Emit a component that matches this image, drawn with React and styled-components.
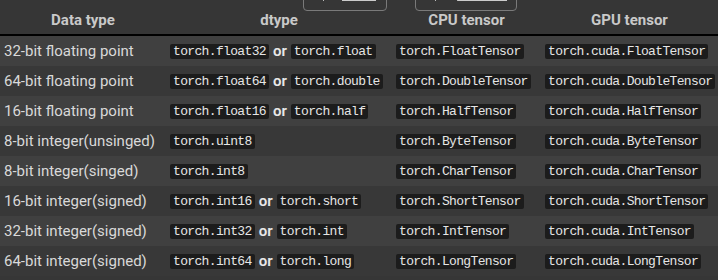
import React from "react";
import styled, { createGlobalStyle } from "styled-components";

const GlobalStyle = createGlobalStyle`
  html, body {
    margin: 0;
    padding: 0;
    background: #363636;
    overflow: hidden;
  }
`;

const Page = styled.div`
  position: relative;
  width: 718px;
  height: 280px;
  background: #363636;
  font-family: Roboto, "Noto Sans", sans-serif;
`;

const Table = styled.table`
  width: 718px;
  border-collapse: collapse;
  table-layout: fixed;
`;

const HeadCell = styled.th`
  width: ${(p) => p.$w}px;
  height: 35px;
  box-sizing: border-box;
  padding: 6px 4px 0;
  text-align: center;
  font-size: 15px;
  font-weight: 700;
  color: #c9c9c9;
  border-bottom: 2px solid #000;
`;

const Row = styled.tr`
  background: ${(p) => (p.$odd ? "#404040" : "#383838")};
`;

const Cell = styled.td`
  height: 30px;
  padding: 0 4px;
  font-size: 15px;
  color: #d9d9d9;
  white-space: nowrap;
  vertical-align: middle;
`;

const Code = styled.code`
  display: inline-block;
  vertical-align: 1px;
  font-family: "Liberation Mono", "DejaVu Sans Mono", monospace;
  font-size: 13px;
  letter-spacing: -0.65px;
  line-height: 15px;
  padding: 0 3px;
  background: #1c1c1c;
  color: #e6e6e6;
  border-radius: 2px;
`;

const Or = styled.span`
  font-weight: 600;
  color: #e8e8e8;
  margin: 0 4px;
`;

/* floating toolbar cut by the top edge */
const Toolbar = styled.div`
  position: absolute;
  top: -11px;
  left: 303px;
  display: flex;
  gap: 28px;
`;

const ToolButton = styled.div`
  display: flex;
  align-items: flex-end;
  gap: ${(p) => p.$gap}px;
  width: ${(p) => p.$w}px;
  height: 22px;
  box-sizing: border-box;
  padding: 0 0 9px 19px;
  border: 1px solid #7a7a7a;
  border-radius: 4px;
  background: #363636;
`;

const Glyph = styled.span`
  display: flex;
  align-items: flex-end;
`;

const Tick = styled.span`
  width: 1px;
  height: 3px;
  background: #bbb;
`;

const Under = styled.span`
  width: ${(p) => p.$w}px;
  height: 1px;
  background: #ccc;
`;

const rows = [
  ["32-bit floating point", ["torch.float32", "torch.float"], "torch.FloatTensor", "torch.cuda.FloatTensor"],
  ["64-bit floating point", ["torch.float64", "torch.double"], "torch.DoubleTensor", "torch.cuda.DoubleTensor"],
  ["16-bit floating point", ["torch.float16", "torch.half"], "torch.HalfTensor", "torch.cuda.HalfTensor"],
  ["8-bit integer(unsinged)", ["torch.uint8"], "torch.ByteTensor", "torch.cuda.ByteTensor"],
  ["8-bit integer(singed)", ["torch.int8"], "torch.CharTensor", "torch.cuda.CharTensor"],
  ["16-bit integer(signed)", ["torch.int16", "torch.short"], "torch.ShortTensor", "torch.cuda.ShortTensor"],
  ["32-bit integer(signed)", ["torch.int32", "torch.int"], "torch.IntTensor", "torch.cuda.IntTensor"],
  ["64-bit integer(signed)", ["torch.int64", "torch.long"], "torch.LongTensor", "torch.cuda.LongTensor"],
];

export default function App() {
  return (
    <Page>
      <GlobalStyle />
      <Table>
        <thead>
          <tr>
            <HeadCell $w={166}>Data type</HeadCell>
            <HeadCell $w={226}>dtype</HeadCell>
            <HeadCell $w={149}>CPU tensor</HeadCell>
            <HeadCell $w={177}>GPU tensor</HeadCell>
          </tr>
        </thead>
        <tbody>
          {rows.map(([type, dtypes, cpu, gpu], i) => (
            <Row key={type} $odd={i % 2 === 0}>
              <Cell>{type}</Cell>
              <Cell>
                <Code>{dtypes[0]}</Code>
                {dtypes[1] && (
                  <>
                    <Or>or</Or>
                    <Code>{dtypes[1]}</Code>
                  </>
                )}
              </Cell>
              <Cell>
                <Code>{cpu}</Code>
              </Cell>
              <Cell>
                <Code>{gpu}</Code>
              </Cell>
            </Row>
          ))}
        </tbody>
      </Table>
      <Toolbar>
        <ToolButton $w={84} $gap={18}>
          <Tick />
          <Under $w={34} />
        </ToolButton>
        <ToolButton $w={102} $gap={21}>
          <Tick />
          <Glyph>
            <Tick />
            <Under $w={49} />
          </Glyph>
        </ToolButton>
      </Toolbar>
    </Page>
  );
}
